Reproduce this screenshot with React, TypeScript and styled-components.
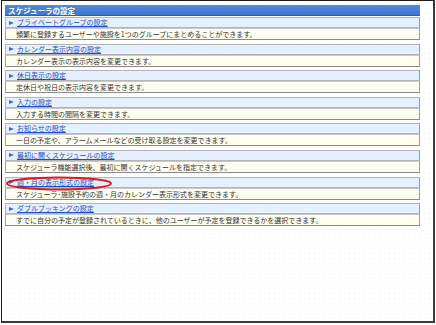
import React from "react";
import styled, { createGlobalStyle } from "styled-components";

const Global = createGlobalStyle`
  html, body { margin: 0; padding: 0; background: #ffffff; }
  body { font-family: "Noto Sans CJK JP", "Noto Sans", sans-serif; }
`;

const Frame = styled.div`
  position: relative;
  margin-left: 1px;
  width: 431px;
  height: 320px;
  border-top: 1px solid #1a1a1a;
  border-left: 1px solid #1a1a1a;
  border-right: 2px solid #3a3a3a;
  border-bottom: 2px solid #3a3a3a;
  padding: 4px 13px 0 3px;
  box-sizing: content-box;
  background-color: #ffffff;
  background-image: radial-gradient(#f1f1f1 0.7px, transparent 0.8px);
  background-size: 5px 5px;
  width: 415px;
  height: 316px;
`;

const Header = styled.div`
  height: 11px;
  background: linear-gradient(#4f8ade, #3d78cf);
  border-bottom: 1px solid #2f5fa8;
  color: #ffffff;
  font-weight: bold;
  font-size: 7.5px;
  line-height: 11px;
  padding-left: 3px;
  box-sizing: border-box;
  white-space: nowrap;
`;

const List = styled.div`
  display: flex;
  flex-direction: column;
  gap: 3.6px;
  margin-top: 1px;
`;

const Section = styled.div`
  display: flex;
  flex-direction: column;
`;

const TitleRow = styled.div`
  height: 11px;
  box-sizing: border-box;
  background: #e4efff;
  border: 1px solid #b4b4b4;
  border-right-color: #9a9a9a;
  display: flex;
  align-items: center;
  padding-left: 3px;
  gap: 3px;
  white-space: nowrap;
`;

const Arrow = styled.span`
  width: 0;
  height: 0;
  border-top: 2.5px solid transparent;
  border-bottom: 2.5px solid transparent;
  border-left: 5px solid #3a6cc6;
`;

const TitleLink = styled.a`
  font-size: 7px;
  line-height: 9px;
  color: #1d4fc2;
  text-decoration: underline;
  cursor: pointer;
`;

const DescRow = styled.div`
  height: 12px;
  box-sizing: border-box;
  background: #fffff1;
  border: 1px solid #a0a0a0;
  border-top-color: #c8c8c8;
  border-bottom-color: #8a8a8a;
  font-size: 7px;
  line-height: 10px;
  color: #333333;
  padding-left: 10px;
  white-space: nowrap;
`;

const Marker = styled.svg`
  position: absolute;
  left: 3px;
  top: 175px;
  pointer-events: none;
`;

const items: { title: string; desc: string }[] = [
  { title: "プライベートグループの設定", desc: "頻繁に登録するユーザーや施設を1つのグループにまとめることができます。" },
  { title: "カレンダー表示内容の設定", desc: "カレンダー表示の表示内容を変更できます。" },
  { title: "休日表示の設定", desc: "定休日や祝日の表示内容を変更できます。" },
  { title: "入力の設定", desc: "入力する時間の間隔を変更できます。" },
  { title: "お知らせの設定", desc: "一日の予定や、アラームメールなどの受け取る設定を変更できます。" },
  { title: "最初に開くスケジュールの設定", desc: "スケジューラ機能選択後、最初に開くスケジュールを指定できます。" },
  { title: "週・月の表示形式の設定", desc: "スケジューラ･施設予約の週・月のカレンダー表示形式を変更できます。" },
  { title: "ダブルブッキングの設定", desc: "すでに自分の予定が登録されているときに、他のユーザーが予定を登録できるかを選択できます。" },
];

export default function App() {
  return (
    <>
      <Global />
      <Frame>
        <Header>スケジューラの設定</Header>
        <List>
          {items.map((it) => (
            <Section key={it.title}>
              <TitleRow>
                <Arrow />
                <TitleLink>{it.title}</TitleLink>
              </TitleRow>
              <DescRow>{it.desc}</DescRow>
            </Section>
          ))}
        </List>
        <Marker width="108" height="15" viewBox="0 0 108 15">
          <ellipse cx="54" cy="7.5" rx="52" ry="6" fill="none" stroke="#e01818" strokeWidth="1.8" />
        </Marker>
      </Frame>
    </>
  );
}
